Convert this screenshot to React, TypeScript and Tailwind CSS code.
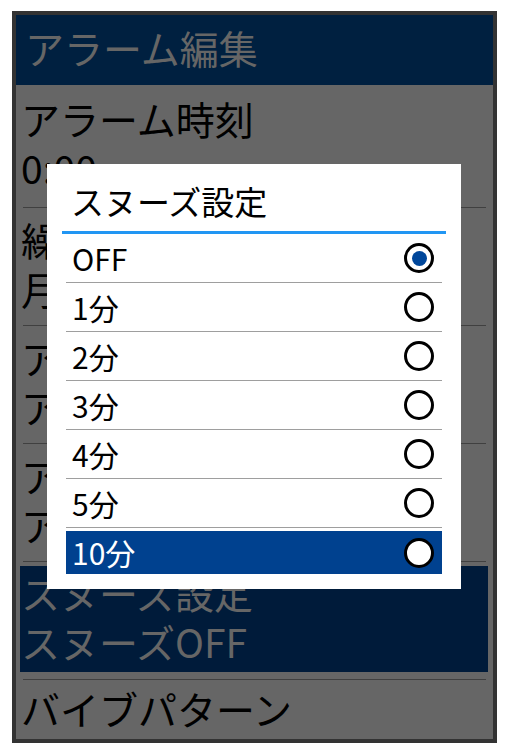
import React from 'react';

const font = { fontFamily: "'Noto Sans CJK JP', sans-serif" };

const options = ['OFF', '1分', '2分', '3分', '4分', '5分', '10分'];

// radio ring used in the snooze dialog
const Radio = ({ checked }: { checked: boolean }) => (
  <div className="w-[30px] h-[30px] rounded-full border-[3px] border-black bg-white flex items-center justify-center shrink-0">
    {checked && <div className="w-[15px] h-[15px] rounded-full bg-[#00479b]"></div>}
  </div>
);

const Row = ({ title, value, h }: { title: string; value: string; h: string }) => (
  <>
    <div className={`${h} pl-[5px] pb-[6px] flex flex-col justify-center text-[39px] leading-[49px] text-black whitespace-nowrap overflow-hidden`}>
      <div>{title}</div>
      <div>{value}</div>
    </div>
    <div className="mx-[7px] h-px bg-[#404040]"></div>
  </>
);

export default function App() {
  const selected = 0;
  const focused = 6;

  return (
    <div className="w-[507px] h-[753px] bg-white pt-[11px] pl-[12px]" style={font}>
      <div className="relative w-[485px] h-[732px] border-4 border-[#333333] bg-[#666666] overflow-hidden">
        {/* header */}
        <div className="h-[70px] bg-[#002040] flex items-center pl-[9px] pb-[6px] text-[39px] text-[#666666]">
          アラーム編集
        </div>

        <Row title="アラーム時刻" value="0:00" h="h-[122px]" />
        <Row title="繰り返し" value="月火水木金" h="h-[117px]" />
        <Row title="アラーム音" value="アラーム1" h="h-[117px]" />
        <Row title="アラーム音量" value="アラーム音量5" h="h-[117px]" />

        {/* focused row */}
        <div className="h-[117px] pt-[4px] pl-[4px] pr-[5px]">
          <div className="h-[106px] bg-[#001b3a] pl-[1px] pt-[2px] text-[39px] leading-[49px] text-[#666666] whitespace-nowrap">
            <div>スヌーズ設定</div>
            <div>スヌーズOFF</div>
          </div>
        </div>
        <div className="mx-[7px] h-px bg-[#404040]"></div>

        <div className="pl-[5px] pt-[4px] text-[39px] leading-[49px] text-black">バイブパターン</div>

        {/* snooze dialog */}
        <div className="absolute left-[31px] top-[149px] w-[414px] bg-white pb-[12px]">
          <div className="h-[67px] pt-[17px] pl-[24px] text-[33px] leading-[40px] text-black">スヌーズ設定</div>
          <div className="mx-[15px] h-[3px] bg-[#2196f3]"></div>
          <div className="mx-[19px]">
            {options.map((o, i) =>
              i === focused ? (
                <div key={o} className="h-[49px] py-[3px]">
                  <div className="h-[43px] bg-[#00418f] flex items-center justify-between pl-[6px] pr-[8px] text-[30px] text-white">
                    <span>{o}</span>
                    <Radio checked={i === selected} />
                  </div>
                </div>
              ) : (
                <div key={o} className="h-[49px] border-b border-[#9e9e9e] flex items-center justify-between pl-[6px] pr-[8px] text-[30px] text-black">
                  <span className="pt-[1px]">{o}</span>
                  <Radio checked={i === selected} />
                </div>
              )
            )}
          </div>
        </div>
      </div>
    </div>
  );
}
